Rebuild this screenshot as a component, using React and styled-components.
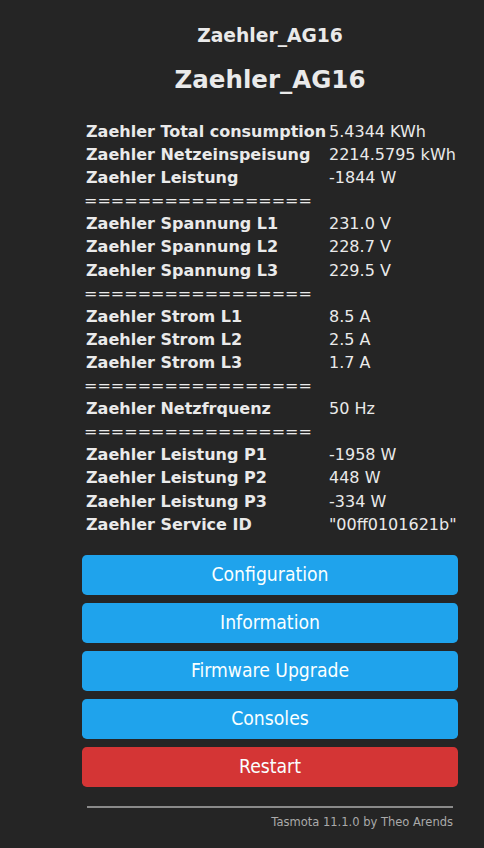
import React from "react";
import styled, { createGlobalStyle } from "styled-components";

const Global = createGlobalStyle`
  html, body { margin: 0; padding: 0; background: #252525; }
  body {
    font-family: Verdana, "DejaVu Sans", sans-serif;
    color: #eaeaea;
  }
`;

const Page = styled.div`
  display: flex;
  justify-content: flex-start;
  padding: 25px 0 20px 82px;
`;

const Container = styled.div`
  width: 376px;
  display: flex;
  flex-direction: column;
`;

const Title = styled.h3`
  margin: 0;
  text-align: center;
  font-size: 18.72px;
  line-height: 22px;
  font-weight: bold;
`;

const Name = styled.h2`
  margin: 19px 0 0;
  text-align: center;
  font-size: 24.5px;
  line-height: 28px;
  font-weight: bold;
`;

const Table = styled.table`
  margin-top: 26px;
  width: 100%;
  border-collapse: collapse;
  font-size: 16px;
`;

const Cell = styled.td`
  padding: 1px 0 1px ${(p) => (p.$label ? "4px" : "2px")};
  line-height: 21.1px;
  white-space: nowrap;
  font-weight: ${(p) => (p.$label ? "bold" : "normal")};
  width: ${(p) => (p.$label ? "241px" : "auto")};
`;

const Buttons = styled.div`
  margin-top: 19.5px;
  display: flex;
  flex-direction: column;
  gap: 8.6px;
`;

const Button = styled.button`
  border: 0;
  border-radius: 0.3rem;
  background: ${(p) => (p.$danger ? "#d43535" : "#1fa3ec")};
  color: #faffff;
  line-height: 39.4px;
  font-size: 19.2px;
  font-family: "DejaVu Sans Condensed", "DejaVu Sans", sans-serif;
  font-stretch: condensed;
  width: 100%;
  padding: 0;
  cursor: pointer;
`;

const Footer = styled.div`
  margin-top: 19px;
  padding: 0 5px;
  text-align: right;
  font-size: 11.5px;
`;

const Rule = styled.hr`
  margin: 0 0 7px;
  border: 0;
  border-top: 2px solid #8a8a8a;
  height: 0;
`;

const Credit = styled.a`
  color: #aaa;
  text-decoration: none;
`;

const SEP = "=================";

const rows = [
  ["Zaehler Total consumption", "5.4344 KWh"],
  ["Zaehler Netzeinspeisung", "2214.5795 kWh"],
  ["Zaehler Leistung", "-1844 W"],
  [SEP],
  ["Zaehler Spannung L1", "231.0 V"],
  ["Zaehler Spannung L2", "228.7 V"],
  ["Zaehler Spannung L3", "229.5 V"],
  [SEP],
  ["Zaehler Strom L1", "8.5 A"],
  ["Zaehler Strom L2", "2.5 A"],
  ["Zaehler Strom L3", "1.7 A"],
  [SEP],
  ["Zaehler Netzfrquenz", "50 Hz"],
  [SEP],
  ["Zaehler Leistung P1", "-1958 W"],
  ["Zaehler Leistung P2", "448 W"],
  ["Zaehler Leistung P3", "-334 W"],
  ["Zaehler Service ID", "\"00ff0101621b\""],
];

export default function App() {
  return (
    <>
      <Global />
      <Page>
        <Container>
          <Title>Zaehler_AG16</Title>
          <Name>Zaehler_AG16</Name>
          <Table>
            <tbody>
              {rows.map((r, i) =>
                r.length === 1 ? (
                  <tr key={i}>
                    <Cell colSpan={2}>{r[0]}</Cell>
                  </tr>
                ) : (
                  <tr key={i}>
                    <Cell $label>{r[0]}</Cell>
                    <Cell>{r[1]}</Cell>
                  </tr>
                )
              )}
            </tbody>
          </Table>
          <Buttons>
            <Button>Configuration</Button>
            <Button>Information</Button>
            <Button>Firmware Upgrade</Button>
            <Button>Consoles</Button>
            <Button $danger>Restart</Button>
          </Buttons>
          <Footer>
            <Rule />
            <Credit href="#">Tasmota 11.1.0 by Theo Arends</Credit>
          </Footer>
        </Container>
      </Page>
    </>
  );
}
